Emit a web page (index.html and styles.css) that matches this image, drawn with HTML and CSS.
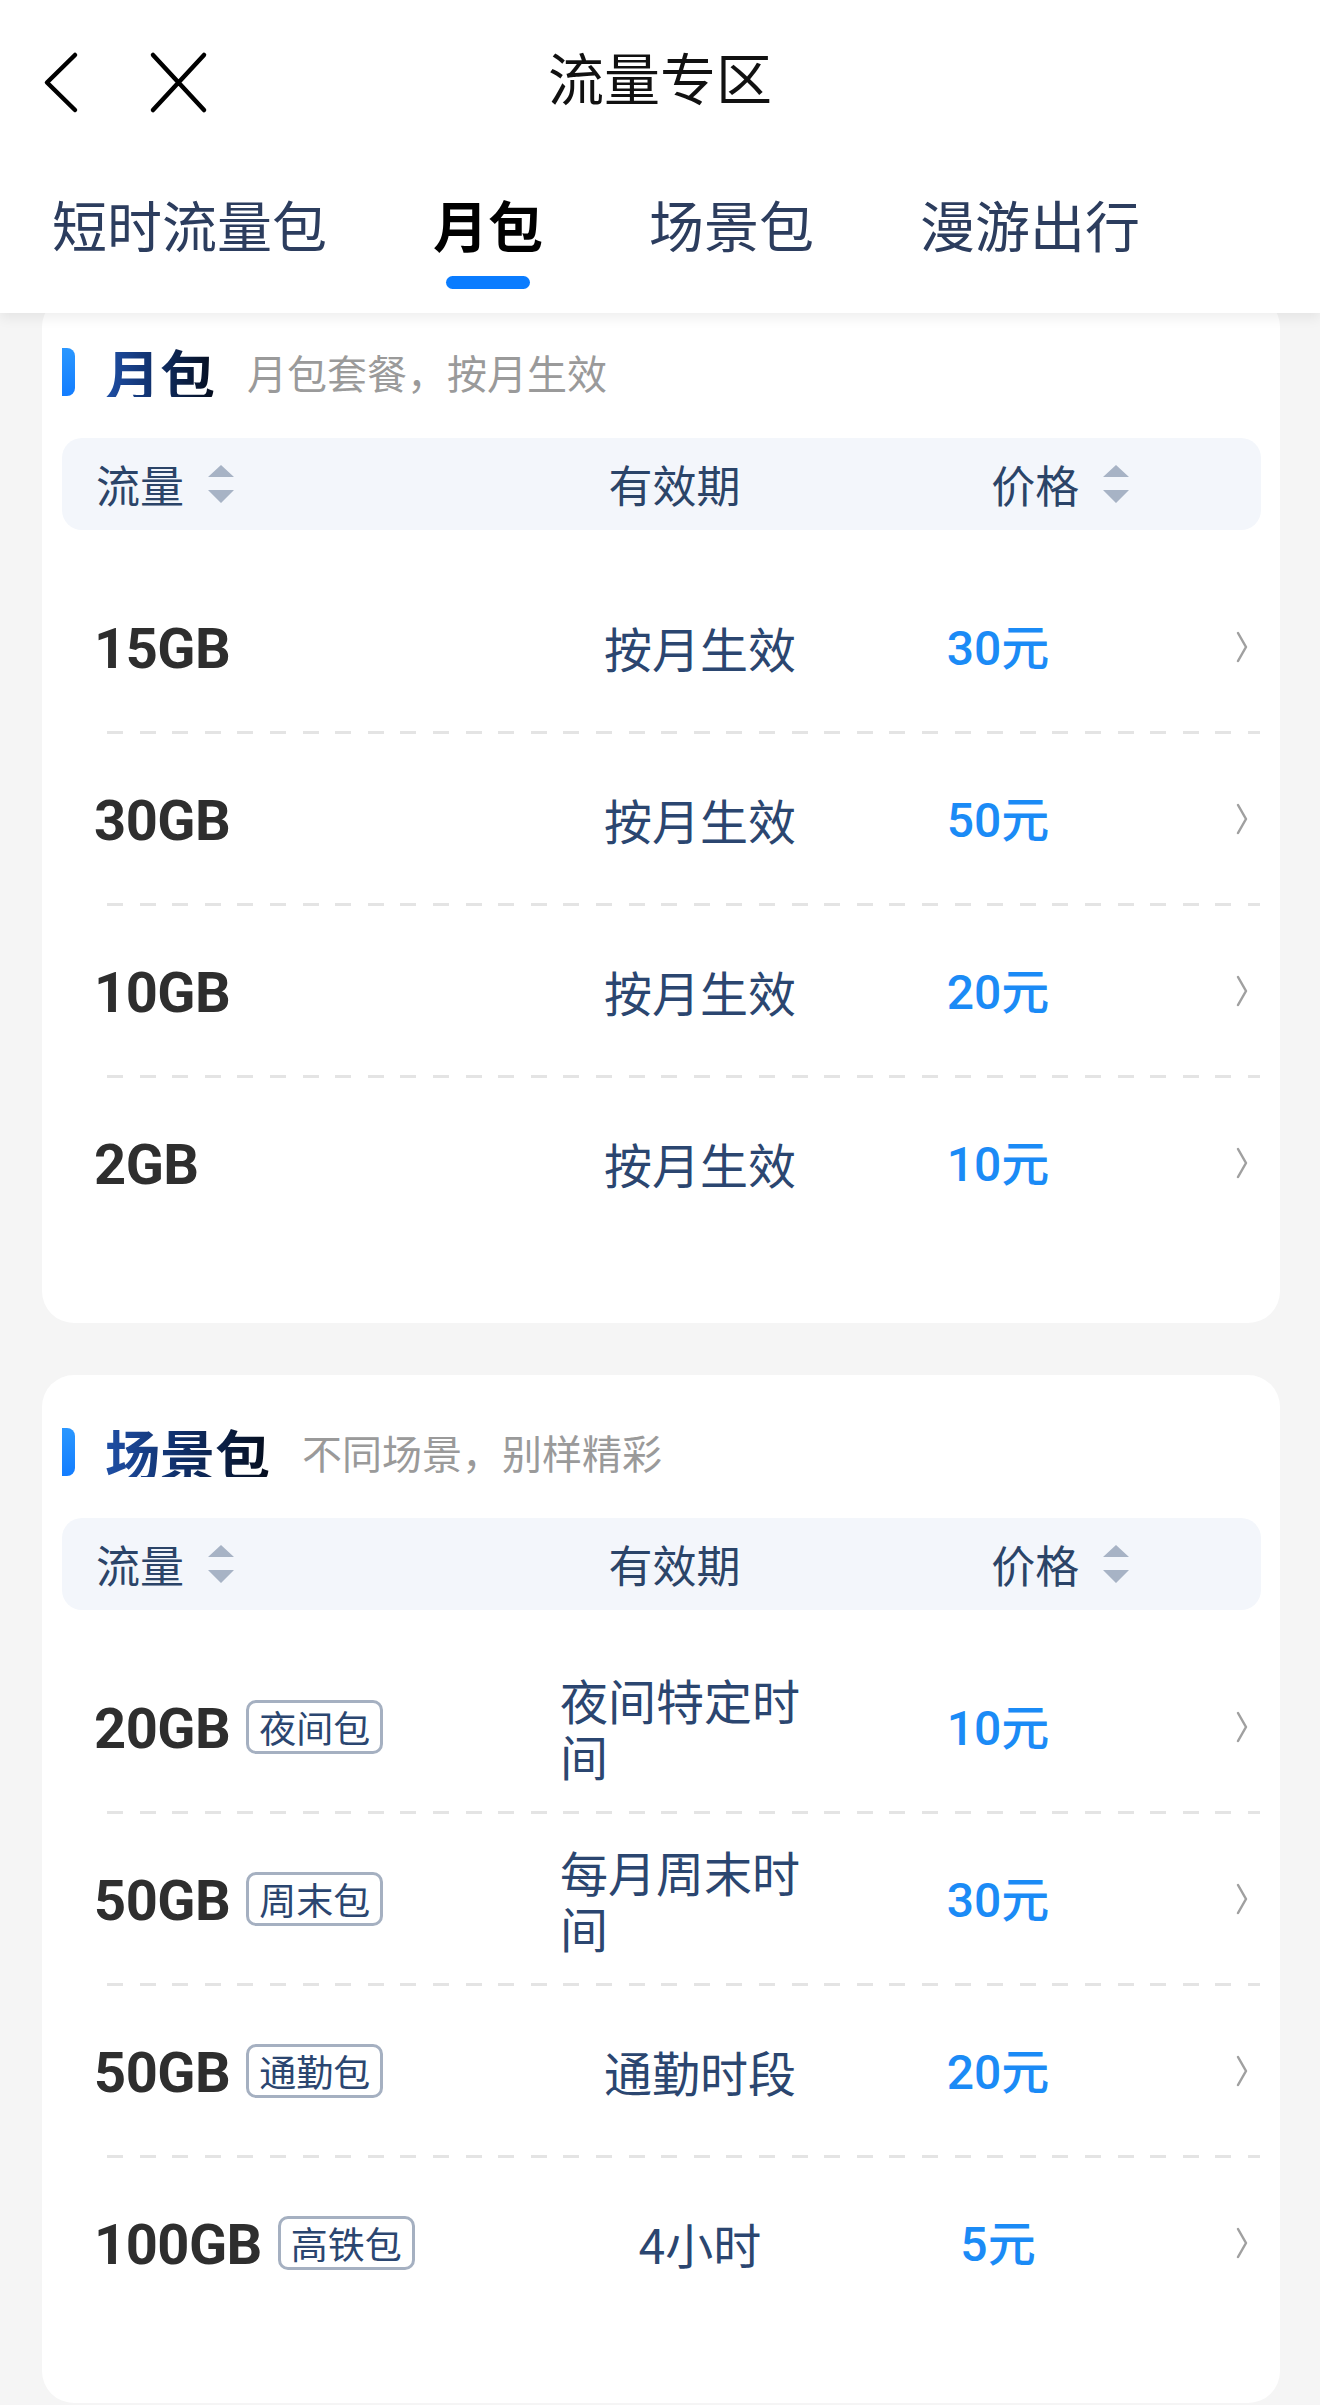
FILE: index.html
```html
<!DOCTYPE html>
<html lang="zh-CN">
<head>
<meta charset="utf-8">
<title>流量专区</title>
<link rel="stylesheet" href="styles.css">
</head>
<body>
<div class="page">
  <header class="topbar">
    <div class="navrow">
      <div class="nav-icons">
        <svg class="ic-back" width="40" height="70" viewBox="0 0 40 70" aria-hidden="true"><path d="M33 10 L5 37.5 L33 65" fill="none" stroke="#000" stroke-width="4.5" stroke-linecap="round" stroke-linejoin="round"/></svg>
        <svg class="ic-close" width="60" height="70" viewBox="0 0 60 70" aria-hidden="true"><path d="M5 10 L56 65 M56 10 L5 65" fill="none" stroke="#000" stroke-width="4.5" stroke-linecap="round"/></svg>
      </div>
      <h1 class="nav-title">流量专区</h1>
      <div></div>
    </div>
    <nav class="tabs">
      <div class="tab">短时流量包</div>
      <div class="tab active">月包<span class="tab-bar"></span></div>
      <div class="tab">场景包</div>
      <div class="tab">漫游出行</div>
    </nav>
  </header>

  <main class="content">
    <section class="card">
      <div class="sec-head">
        <span class="sec-bar"></span>
        <h2 class="sec-title">月包</h2>
        <span class="sec-sub">月包套餐，按月生效</span>
      </div>
      <div class="thead">
        <div class="th th-left">流量<svg class="sort" width="26" height="38" viewBox="0 0 26 38"><path d="M0 12 L13 0 L26 12 Z M0 25 L26 25 L13 38 Z" fill="#a7b3c5"/></svg></div>
        <div class="th th-center">有效期</div>
        <div class="th th-center">价格<svg class="sort" width="26" height="38" viewBox="0 0 26 38"><path d="M0 12 L13 0 L26 12 Z M0 25 L26 25 L13 38 Z" fill="#a7b3c5"/></svg></div>
      </div>
      <div class="rows">
        <div class="row">
          <div class="c-flow"><span class="gb">15GB</span></div>
          <div class="c-period"><span>按月生效</span></div>
          <div class="c-price">30元</div>
          <div class="c-go"><svg width="12" height="32" viewBox="0 0 12 32"><path d="M2 2 L10 16 L2 30" fill="none" stroke="#a0a0a0" stroke-width="2.5" stroke-linecap="round" stroke-linejoin="round"/></svg></div>
        </div>
        <div class="row">
          <div class="c-flow"><span class="gb">30GB</span></div>
          <div class="c-period"><span>按月生效</span></div>
          <div class="c-price">50元</div>
          <div class="c-go"><svg width="12" height="32" viewBox="0 0 12 32"><path d="M2 2 L10 16 L2 30" fill="none" stroke="#a0a0a0" stroke-width="2.5" stroke-linecap="round" stroke-linejoin="round"/></svg></div>
        </div>
        <div class="row">
          <div class="c-flow"><span class="gb">10GB</span></div>
          <div class="c-period"><span>按月生效</span></div>
          <div class="c-price">20元</div>
          <div class="c-go"><svg width="12" height="32" viewBox="0 0 12 32"><path d="M2 2 L10 16 L2 30" fill="none" stroke="#a0a0a0" stroke-width="2.5" stroke-linecap="round" stroke-linejoin="round"/></svg></div>
        </div>
        <div class="row">
          <div class="c-flow"><span class="gb">2GB</span></div>
          <div class="c-period"><span>按月生效</span></div>
          <div class="c-price">10元</div>
          <div class="c-go"><svg width="12" height="32" viewBox="0 0 12 32"><path d="M2 2 L10 16 L2 30" fill="none" stroke="#a0a0a0" stroke-width="2.5" stroke-linecap="round" stroke-linejoin="round"/></svg></div>
        </div>
      </div>
    </section>

    <section class="card">
      <div class="sec-head">
        <span class="sec-bar"></span>
        <h2 class="sec-title">场景包</h2>
        <span class="sec-sub">不同场景，别样精彩</span>
      </div>
      <div class="thead">
        <div class="th th-left">流量<svg class="sort" width="26" height="38" viewBox="0 0 26 38"><path d="M0 12 L13 0 L26 12 Z M0 25 L26 25 L13 38 Z" fill="#a7b3c5"/></svg></div>
        <div class="th th-center">有效期</div>
        <div class="th th-center">价格<svg class="sort" width="26" height="38" viewBox="0 0 26 38"><path d="M0 12 L13 0 L26 12 Z M0 25 L26 25 L13 38 Z" fill="#a7b3c5"/></svg></div>
      </div>
      <div class="rows">
        <div class="row">
          <div class="c-flow"><span class="gb">20GB</span><span class="tag">夜间包</span></div>
          <div class="c-period"><span>夜间特定时间</span></div>
          <div class="c-price">10元</div>
          <div class="c-go"><svg width="12" height="32" viewBox="0 0 12 32"><path d="M2 2 L10 16 L2 30" fill="none" stroke="#a0a0a0" stroke-width="2.5" stroke-linecap="round" stroke-linejoin="round"/></svg></div>
        </div>
        <div class="row">
          <div class="c-flow"><span class="gb">50GB</span><span class="tag">周末包</span></div>
          <div class="c-period"><span>每月周末时间</span></div>
          <div class="c-price">30元</div>
          <div class="c-go"><svg width="12" height="32" viewBox="0 0 12 32"><path d="M2 2 L10 16 L2 30" fill="none" stroke="#a0a0a0" stroke-width="2.5" stroke-linecap="round" stroke-linejoin="round"/></svg></div>
        </div>
        <div class="row">
          <div class="c-flow"><span class="gb">50GB</span><span class="tag">通勤包</span></div>
          <div class="c-period"><span>通勤时段</span></div>
          <div class="c-price">20元</div>
          <div class="c-go"><svg width="12" height="32" viewBox="0 0 12 32"><path d="M2 2 L10 16 L2 30" fill="none" stroke="#a0a0a0" stroke-width="2.5" stroke-linecap="round" stroke-linejoin="round"/></svg></div>
        </div>
        <div class="row">
          <div class="c-flow"><span class="gb">100GB</span><span class="tag">高铁包</span></div>
          <div class="c-period"><span>4小时</span></div>
          <div class="c-price">5元</div>
          <div class="c-go"><svg width="12" height="32" viewBox="0 0 12 32"><path d="M2 2 L10 16 L2 30" fill="none" stroke="#a0a0a0" stroke-width="2.5" stroke-linecap="round" stroke-linejoin="round"/></svg></div>
        </div>
      </div>
    </section>
  </main>
</div>
</body>
</html>
```

FILE: styles.css
```css
* { box-sizing: border-box; }

html, body {
  margin: 0;
  padding: 0;
  background: #f5f5f5;
}

body {
  font-family: "Noto Sans CJK SC", "Noto Sans", sans-serif;
  color: #2b4670;
}

.page {
  width: 1320px;
  min-height: 2405px;
  background: #f5f5f5;
}

/* ---------- top bar ---------- */
.topbar {
  position: relative;
  z-index: 2;
  background: #fff;
  box-shadow: 0 5px 12px rgba(0, 0, 0, 0.07);
}

.navrow {
  height: 160px;
  display: grid;
  grid-template-columns: 1fr auto 1fr;
  align-items: center;
}

.nav-icons {
  display: flex;
  align-items: center;
  gap: 66px;
  padding-left: 42px;
}

.nav-icons svg { display: block; }

.nav-title {
  margin: 0 0 8px 0;
  font-size: 56px;
  line-height: 1.2;
  font-weight: 400;
  color: #111;
}

.tabs {
  display: flex;
  align-items: flex-start;
  gap: 106px;
  padding: 30px 0 24px 52px;
}

.tab {
  display: flex;
  flex-direction: column;
  align-items: center;
  font-size: 55px;
  line-height: 66px;
  color: #2c3d5e;
  height: 99px;
}

.tab.active {
  color: #000;
  font-weight: 700;
}

.tab-bar {
  display: block;
  width: 84px;
  height: 13px;
  margin-top: 20px;
  border-radius: 7px;
  background: #0a7cff;
}

/* ---------- content ---------- */
.content {
  margin-top: -18px;
  padding: 0 40px 2px 42px;
  display: flex;
  flex-direction: column;
  gap: 52px;
}

.card {
  background: #fff;
  border-radius: 32px;
  padding: 52px 19px 74px 20px;
}

.sec-head {
  display: flex;
  align-items: center;
  height: 50px;
}

.sec-bar {
  width: 13px;
  height: 48px;
  border-radius: 0 8px 8px 0;
  background: linear-gradient(180deg, #2a97ff, #137dff);
}

.sec-title {
  margin: 0 0 0 30px;
  font-size: 55px;
  line-height: 50px;
  font-weight: 700;
  background: linear-gradient(90deg, #1f4fa6 0%, #10306a 45%, #050d1d 100%);
  -webkit-background-clip: text;
  background-clip: text;
  color: transparent;
}

.sec-sub {
  margin-left: 32px;
  font-size: 40px;
  line-height: 50px;
  color: #9a9a9a;
}

.thead {
  margin-top: 41px;
  height: 92px;
  border-radius: 20px;
  background: #f3f6fb;
  display: grid;
  grid-template-columns: 1fr 1fr 1fr;
  align-items: center;
  padding: 0 8px 0 34px;
}

.th {
  display: flex;
  align-items: center;
  gap: 24px;
  font-size: 44px;
  line-height: 60px;
  color: #2b4468;
}

.th-left { justify-content: flex-start; }
.th-center { justify-content: center; }

.sort { display: block; }

.rows {
  padding-top: 31px;
}

.row {
  position: relative;
  height: 172px;
  display: grid;
  grid-template-columns: 456px 300px 296px 1fr;
  align-items: center;
  padding-left: 32px;
}

.row:not(:last-child)::after {
  content: "";
  position: absolute;
  left: 45px;
  right: 1px;
  bottom: -1px;
  height: 3px;
  background: repeating-linear-gradient(90deg, #e4e4e4 0 16px, transparent 16px 32.6px);
}

.c-flow {
  display: flex;
  align-items: center;
}

.gb {
  margin-top: 4px;
  font-family: Roboto, "Noto Sans CJK SC", sans-serif;
  font-weight: 700;
  font-size: 56px;
  line-height: 60px;
  color: #2e2e2e;
  letter-spacing: -0.5px;
}

.tag {
  margin-left: 16px;
  padding: 0 10px;
  height: 54px;
  border: 3px solid #a5b0c1;
  border-radius: 10px;
  font-size: 37px;
  line-height: 48px;
  color: #2b4670;
}

.c-period {
  display: flex;
  justify-content: center;
}

.c-period span {
  max-width: 280px;
  text-align: left;
  font-size: 48px;
  line-height: 56px;
  color: #2b4670;
}

.c-price {
  margin-top: 4px;
  text-align: center;
  font-family: Roboto, "Noto Sans CJK SC", sans-serif;
  font-weight: 500;
  font-size: 48px;
  line-height: 60px;
  color: #1b8bf6;
}

.c-go {
  display: flex;
  justify-content: flex-end;
  padding-right: 13px;
}

.c-go svg { display: block; }
```
